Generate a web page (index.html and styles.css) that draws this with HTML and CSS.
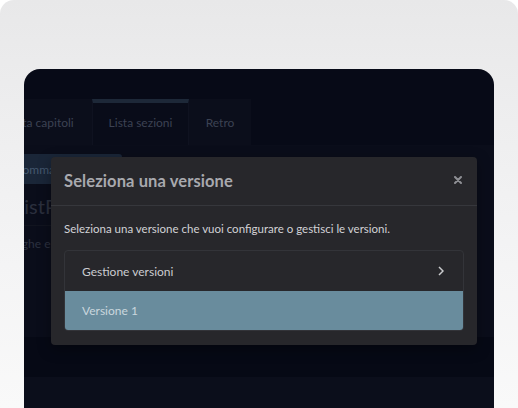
FILE: index.html
```html
<!DOCTYPE html>
<html lang="it">
<head>
<meta charset="utf-8">
<link rel="stylesheet" href="styles.css">
</head>
<body>
<div class="frame">
  <div class="app">
    <div class="tabs">
      <div class="tab tab-cut"><span class="cut-text">Lista capitoli</span></div>
      <div class="tab tab-active">Lista sezioni</div>
      <div class="tab tab-last">Retro</div>
    </div>
    <div class="content">
      <div class="btn"><span class="btn-text">Sommario</span></div>
      <div class="heading"><span class="heading-text">ListPage</span></div>
      <div class="desc"><span class="desc-text">Aggiunghe e modifica</span></div>
    </div>
    <div class="gap-band"></div>
    <div class="lower-band"></div>

    <div class="modal">
      <div class="modal-header">
        <span class="modal-title">Seleziona una versione</span>
        <svg class="close" width="8" height="8" viewBox="0 0 8 8"><path d="M1 1 L7 7 M7 1 L1 7" stroke="#8e8f94" stroke-width="2" stroke-linecap="round"/></svg>
      </div>
      <div class="modal-body">
        <p class="modal-text">Seleziona una versione che vuoi configurare o gestisci le versioni.</p>
        <div class="list">
          <div class="list-item">
            <span>Gestione versioni</span>
            <svg class="chev" width="6" height="10" viewBox="0 0 6 10"><path d="M1 1 L5 5 L1 9" fill="none" stroke="#c9cacd" stroke-width="1.5"/></svg>
          </div>
          <div class="list-item selected"><span>Versione 1</span></div>
        </div>
      </div>
    </div>
  </div>
</div>
</body>
</html>
```

FILE: styles.css
```css
* { box-sizing: border-box; }
html, body { margin: 0; padding: 0; }
body {
  width: 518px;
  height: 408px;
  overflow: hidden;
  background: #ffffff;
  font-family: "Lato", "Liberation Sans", sans-serif;
}
.frame {
  width: 518px;
  height: 408px;
  border-radius: 14px 14px 0 0;
  background: linear-gradient(180deg, #e8e8e9 0%, #eeeeef 30%, #f4f4f5 65%, #f9f9f9 100%);
  padding: 69px 24px 0 24px;
}
.app {
  position: relative;
  width: 470px;
  height: 339px;
  background: #070a17;
  border-radius: 16px 16px 0 0;
  padding-top: 30px;
  overflow: hidden;
  display: flex;
  flex-direction: column;
}
.tabs {
  display: flex;
  height: 46px;
}
.tab {
  background: #0b0e1b;
  color: #3c4253;
  font-size: 12px;
  display: flex;
  align-items: center;
  justify-content: center;
  border-top: 4px solid transparent;
  padding-bottom: 4px;
  white-space: nowrap;
}
.tab-cut {
  width: 68px;
  justify-content: flex-start;
  overflow: hidden;
}
.cut-text {
  margin-left: -16px;
}
.tab-active {
  width: 97px;
  border-top-color: #1d2838;
  border-left: 1px solid #0f1220;
  border-right: 1px solid #0f1220;
  background: #090c19;
}
.tab-last {
  width: 62px;
}

.content {
  display: flex;
  flex-direction: column;
  height: 192px;
  background: #0a0d1a;
  padding-top: 9px;
}
.btn {
  width: 98px;
  height: 30px;
  background: #1a2638;
  color: #44586f;
  font-size: 12px;
  display: flex;
  align-items: center;
  border-radius: 0 3px 3px 0;
  overflow: hidden;
  white-space: nowrap;
}
.btn-text {
  margin-left: -8px;
}
.heading {
  margin-top: 10px;
  color: #2a2f3d;
  font-size: 20px;
  height: 32px;
  border-bottom: 1px solid #11141f;
  width: 60px;
  overflow: hidden;
  white-space: nowrap;
}
.heading-text {
  margin-left: -10px;
}
.desc {
  margin-top: 10px;
  color: #2c3140;
  font-size: 12px;
  overflow: hidden;
  white-space: nowrap;
  width: 60px;
}
.desc-text {
  margin-left: -39px;
}
.gap-band {
  height: 40px;
  background: #060915;
}
.lower-band {
  flex: 1;
  background: #0b0e1b;
}

.modal {
  position: absolute;
  left: 27px;
  top: 88px;
  width: 426px;
  height: 188px;
  background: #27272b;
  border-radius: 4px;
  box-shadow: 0 4px 14px rgba(0,0,0,0.35);
  display: flex;
  flex-direction: column;
}
.modal-header {
  height: 49px;
  display: flex;
  align-items: center;
  justify-content: space-between;
  padding: 0 15px 0 13px;
  border-bottom: 1px solid #36373c;
}
.modal-title {
  color: #a8a9ae;
  font-size: 16.5px;
  font-weight: 700;
  letter-spacing: 0.1px;
}
.close {
  display: block;
  margin-top: -2px;
}
.modal-body {
  padding: 15px 13px 0 13px;
}
.modal-text {
  margin: 0 0 13px 0;
  color: #d2d2d6;
  font-size: 11.5px;
  line-height: 16px;
}
.list {
  border: 1px solid #333439;
  border-radius: 4px;
  overflow: hidden;
}
.list-item {
  height: 40px;
  display: flex;
  align-items: center;
  justify-content: space-between;
  padding: 0 19px 0 17px;
  color: #cbccd0;
  font-size: 12px;
}
.list-item.selected {
  background: #698c9d;
  color: #cad7dd;
  height: 39px;
}
.chev { display: block; }
```
